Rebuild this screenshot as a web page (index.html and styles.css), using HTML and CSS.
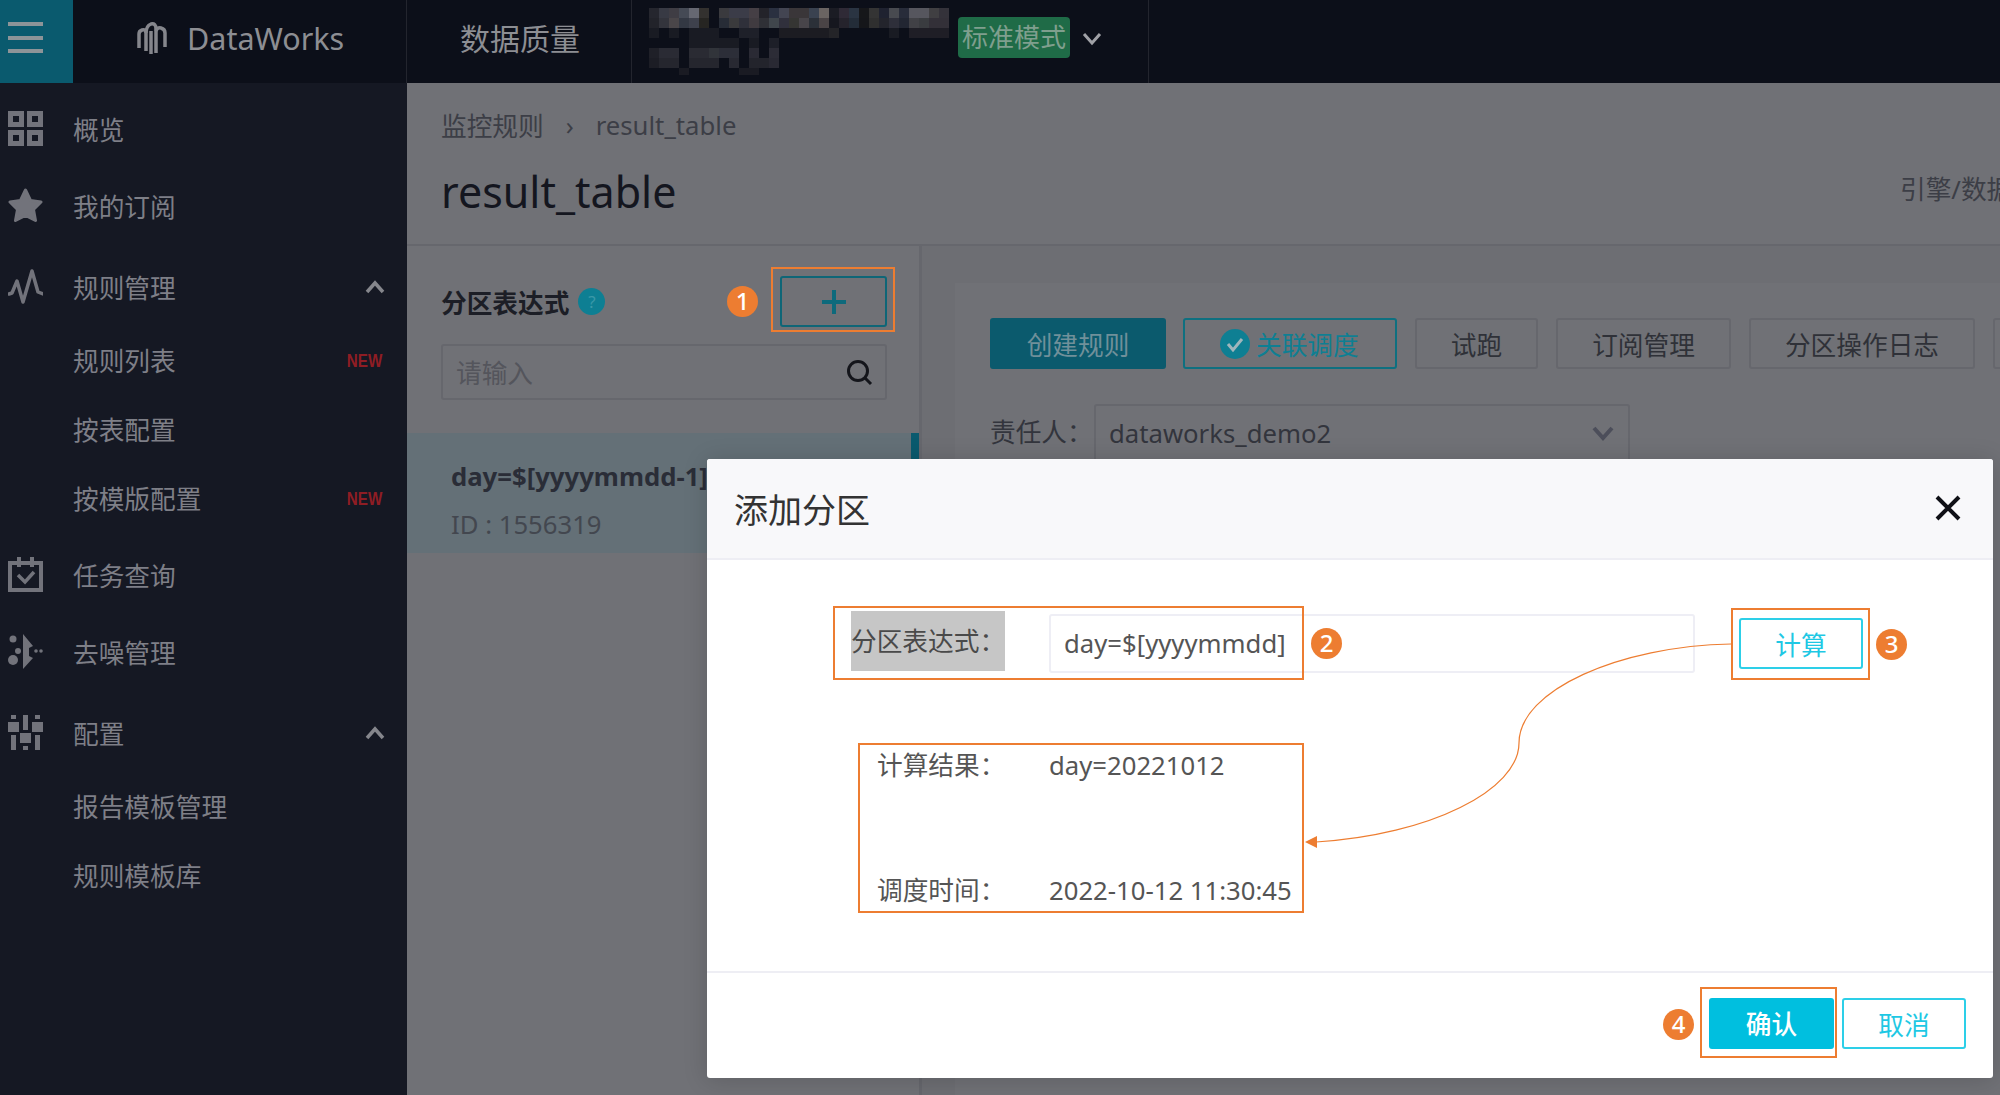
FILE: index.html
```html
<!DOCTYPE html>
<html lang="zh-CN">
<head>
  <meta charset="UTF-8" />
  <title>DataWorks 数据质量</title>
  <link rel="stylesheet" href="styles.css">
</head>
<body>
  <header class="topbar">
    <div class="menu-tile"><span></span><span></span><span></span></div>
    <div class="brand">
      <svg class="brand-logo" viewBox="0 0 34 36" fill="none" stroke="#85868c" stroke-width="3.500">
        <path d="M4 28V14q0-3 3-4q4-1 4 3V31"/>
        <path d="M11 13q0-7 5-9q5-1 5 5V33"/>
        <path d="M21 11q1-4 5-3q4 1 4 5V27"/>
        <path d="M16 11V34"/>
      </svg>
      <span>DataWorks</span>
    </div>
    <div class="product">数据质量</div>
    <div class="workspace">
      <svg class="mosaic" width="310" height="70" viewBox="0 0 310 70">
        <g>
          <rect x="0" y="0" width="10" height="10" fill="#25262e"/><rect x="10" y="0" width="10" height="10" fill="#383a44"/><rect x="20" y="0" width="10" height="10" fill="#3f3d44"/><rect x="30" y="0" width="10" height="10" fill="#454a55"/><rect x="40" y="0" width="10" height="10" fill="#666872"/><rect x="50" y="0" width="10" height="10" fill="#33312f"/>
          <rect x="70" y="0" width="10" height="10" fill="#3a3a3e"/><rect x="80" y="0" width="20" height="10" fill="#3b3c48"/><rect x="100" y="0" width="10" height="10" fill="#453f45"/><rect x="110" y="0" width="10" height="10" fill="#23232a"/><rect x="120" y="0" width="10" height="10" fill="#2a3040"/><rect x="130" y="0" width="10" height="10" fill="#434552"/><rect x="140" y="0" width="20" height="10" fill="#3a3639"/><rect x="160" y="0" width="10" height="10" fill="#3a4250"/><rect x="170" y="0" width="10" height="10" fill="#6a6462"/><rect x="180" y="0" width="10" height="10" fill="#1b1c24"/><rect x="190" y="0" width="10" height="10" fill="#2f2a36"/><rect x="200" y="0" width="10" height="10" fill="#2a3442"/><rect x="210" y="0" width="10" height="10" fill="#16171a"/><rect x="220" y="0" width="10" height="10" fill="#343434"/><rect x="230" y="0" width="10" height="10" fill="#1f2230"/><rect x="240" y="0" width="10" height="10" fill="#484a50"/><rect x="250" y="0" width="10" height="10" fill="#282c3a"/><rect x="260" y="0" width="20" height="10" fill="#56565e"/><rect x="280" y="0" width="10" height="10" fill="#403f42"/><rect x="290" y="0" width="10" height="10" fill="#34323a"/>
        </g>
        <g>
          <rect x="0" y="10" width="10" height="10" fill="#22232a"/><rect x="10" y="10" width="10" height="10" fill="#33343c"/><rect x="20" y="10" width="10" height="10" fill="#4a4649"/><rect x="30" y="10" width="10" height="10" fill="#333843"/><rect x="40" y="10" width="10" height="10" fill="#3e414c"/><rect x="50" y="10" width="10" height="10" fill="#262522"/>
          <rect x="70" y="10" width="10" height="10" fill="#272c36"/><rect x="80" y="10" width="10" height="10" fill="#3a3a3c"/><rect x="90" y="10" width="10" height="10" fill="#2f303a"/><rect x="100" y="10" width="10" height="10" fill="#403b40"/><rect x="110" y="10" width="10" height="10" fill="#2f3036"/><rect x="120" y="10" width="10" height="10" fill="#40464c"/><rect x="130" y="10" width="10" height="10" fill="#30303c"/><rect x="140" y="10" width="10" height="10" fill="#353533"/><rect x="150" y="10" width="10" height="10" fill="#48454a"/><rect x="160" y="10" width="10" height="10" fill="#2b3038"/><rect x="170" y="10" width="10" height="10" fill="#4a4446"/><rect x="180" y="10" width="10" height="10" fill="#16171f"/><rect x="190" y="10" width="10" height="10" fill="#25232c"/><rect x="200" y="10" width="10" height="10" fill="#232c38"/><rect x="210" y="10" width="10" height="10" fill="#15161a"/><rect x="220" y="10" width="10" height="10" fill="#2f2f2f"/><rect x="230" y="10" width="10" height="10" fill="#23242c"/><rect x="240" y="10" width="10" height="10" fill="#2e2f3a"/><rect x="250" y="10" width="10" height="10" fill="#222632"/><rect x="260" y="10" width="10" height="10" fill="#414146"/><rect x="270" y="10" width="10" height="10" fill="#3a3c40"/><rect x="280" y="10" width="20" height="10" fill="#333038"/>
        </g>
        <g fill="#191b23">
          <rect x="0" y="20" width="10" height="10"/><rect x="20" y="20" width="10" height="10"/><rect x="40" y="20" width="30" height="10"/><rect x="90" y="20" width="20" height="10" fill="#1e2029"/><rect x="130" y="20" width="60" height="10" fill="#1c1c22"/><rect x="180" y="20" width="10" height="10" fill="#242428"/><rect x="240" y="20" width="10" height="10"/><rect x="260" y="20" width="40" height="10" fill="#1f1e26"/>
          <rect x="40" y="30" width="50" height="10"/><rect x="100" y="30" width="10" height="10"/><rect x="120" y="30" width="10" height="10" fill="#1d1f28"/>
        </g>
        <g>
          <rect x="0" y="40" width="10" height="10" fill="#1f2028"/><rect x="10" y="40" width="20" height="10" fill="#2a2b34"/><rect x="40" y="40" width="20" height="10" fill="#2a2b33"/><rect x="60" y="40" width="10" height="10" fill="#31343a"/><rect x="70" y="40" width="20" height="10" fill="#2c2e38"/><rect x="100" y="40" width="10" height="10" fill="#2a2a34"/><rect x="120" y="40" width="10" height="10" fill="#2c2c36"/>
          <rect x="0" y="50" width="10" height="10" fill="#1c1d25"/><rect x="10" y="50" width="20" height="10" fill="#25262e"/><rect x="40" y="50" width="30" height="10" fill="#25262e"/><rect x="80" y="50" width="10" height="10" fill="#282932"/><rect x="100" y="50" width="20" height="10" fill="#23242c"/><rect x="120" y="50" width="10" height="10" fill="#292933"/>
          <rect x="30" y="60" width="10" height="7" fill="#1a1b23"/><rect x="90" y="60" width="20" height="7" fill="#1a1b23"/>
        </g>
      </svg>
      <span class="mode-tag">标准模式</span>
      <svg class="chev-small" width="20" height="14" viewBox="0 0 20 14" fill="none" stroke="#a0a1a6" stroke-width="3"><path d="M2 2l8 9 8-9"/></svg>
    </div>
  </header>

  <div class="layout">
    <nav class="sidebar">
      <div class="nav-item">
        <svg class="nav-icon" viewBox="0 0 35 35" fill="none" stroke="#72737b" stroke-width="5"><rect x="2.500" y="2.500" width="11" height="11"/><rect x="21.500" y="2.500" width="11" height="11"/><rect x="2.500" y="21.500" width="11" height="11"/><rect x="21.500" y="21.500" width="11" height="11"/></svg>
        <span>概览</span>
      </div>
      <div class="nav-item">
        <svg class="nav-icon" viewBox="0 0 35 35" fill="#72737b" stroke="#72737b" stroke-width="3" stroke-linejoin="round"><path d="M17.5 2l5 10.500 10.500 1.500-7.500 7.500 2 11-10-5-10 5 2-11L2 14l10.500-1.500z"/></svg>
        <span>我的订阅</span>
      </div>
      <div class="nav-item nav-group">
        <svg class="nav-icon" viewBox="0 0 35 35" fill="none" stroke="#72737b" stroke-width="3.500" stroke-linejoin="round" stroke-linecap="round"><path d="M1 25l3-1 5-12 6 21 9-31 6 21 5 2"/></svg>
        <span>规则管理</span>
        <svg class="nav-chev" width="20" height="14" viewBox="0 0 20 14" fill="none" stroke="#85868c" stroke-width="3.500"><path d="M2 12l8-9 8 9"/></svg>
      </div>
      <div class="nav-sub"><span>规则列表</span><em class="new-tag">NEW</em></div>
      <div class="nav-sub"><span>按表配置</span></div>
      <div class="nav-sub"><span>按模版配置</span><em class="new-tag">NEW</em></div>
      <div class="nav-item nav-group">
        <svg class="nav-icon" viewBox="0 0 35 35" fill="none" stroke="#72737b" stroke-width="4"><rect x="2" y="6" width="31" height="27"/><path d="M11 0v10M24 0v10"/><path d="M10 18l7 7 9-10" stroke-width="3.500"/></svg>
        <span>任务查询</span>
      </div>
      <div class="nav-item">
        <svg class="nav-icon" viewBox="0 0 35 35" fill="#72737b"><circle cx="5" cy="5" r="3.500"/><circle cx="10" cy="17" r="3"/><circle cx="5" cy="26" r="5"/><path d="M15 0l10 12-4 2v8l4 2-10 11z"/><circle cx="28" cy="17" r="1.800"/><circle cx="33" cy="17" r="1.800"/></svg>
        <span>去噪管理</span>
      </div>
      <div class="nav-item nav-group">
        <svg class="nav-icon" viewBox="0 0 35 35" fill="#72737b"><rect x="3" y="0" width="5" height="4"/><rect x="0" y="7" width="11" height="10"/><rect x="3" y="20" width="5" height="15"/><rect x="15" y="0" width="5" height="15"/><rect x="12" y="18" width="11" height="10"/><rect x="15" y="31" width="5" height="4"/><rect x="27" y="0" width="5" height="4"/><rect x="24" y="7" width="11" height="10"/><rect x="27" y="20" width="5" height="15"/></svg>
        <span>配置</span>
        <svg class="nav-chev" width="20" height="14" viewBox="0 0 20 14" fill="none" stroke="#85868c" stroke-width="3.500"><path d="M2 12l8-9 8 9"/></svg>
      </div>
      <div class="nav-sub"><span>报告模板管理</span></div>
      <div class="nav-sub"><span>规则模板库</span></div>
    </nav>

    <main class="main">
      <section class="page-head">
        <div class="crumbs"><span>监控规则</span><i>›</i><span>result_table</span></div>
        <div class="title-row">
          <h1>result_table</h1>
          <span class="engine">引擎/数据源</span>
        </div>
      </section>

      <section class="content">
        <aside class="partition-panel">
          <div class="panel-head">
            <strong>分区表达式</strong>
            <span class="help">?</span>
            <span class="marker marker-one">1</span>
            <button class="plus-btn">
              <svg width="28" height="28" viewBox="0 0 28 28" fill="none" stroke="#0e6a7c" stroke-width="4"><path d="M14 2v24M2 14h24"/></svg>
              <span class="note-box note-plus"></span>
            </button>
          </div>
          <div class="search">
            <span>请输入</span>
            <svg width="28" height="28" viewBox="0 0 28 28" fill="none" stroke="#14151b" stroke-width="3"><circle cx="13" cy="13" r="9.500"/><path d="M20 20l6 6"/></svg>
          </div>
          <div class="partition-item">
            <b>day=$[yyyymmdd-1]</b>
            <span>ID : 1556319</span>
          </div>
        </aside>

        <div class="rules-area">
          <div class="rules-card">
            <div class="toolbar">
              <button class="tool-btn tool-primary">创建规则</button>
              <button class="tool-btn tool-linked">
                <svg width="30" height="30" viewBox="0 0 30 30"><circle cx="15" cy="15" r="15" fill="#0e7f93"/><path d="M8 15l5 6 9-11" fill="none" stroke="#9fb6bc" stroke-width="3"/></svg>
                关联调度
              </button>
              <button class="tool-btn tool-run">试跑</button>
              <button class="tool-btn tool-sub">订阅管理</button>
              <button class="tool-btn tool-log">分区操作日志</button>
              <button class="tool-btn tool-more"></button>
            </div>
            <div class="filter-row">
              <label>责任人：</label>
              <div class="owner-select">
                <span>dataworks_demo2</span>
                <svg width="24" height="16" viewBox="0 0 24 16" fill="none" stroke="#4c4e5a" stroke-width="4"><path d="M3 3l9 10 9-10"/></svg>
              </div>
            </div>
          </div>
        </div>
      </section>
    </main>
  </div>

  <div class="modal">
    <div class="modal-head">
      <h2>添加分区</h2>
      <svg width="26" height="26" viewBox="0 0 26 26" fill="none" stroke="#0f1016" stroke-width="4"><path d="M2 2l22 22M24 2L2 24"/></svg>
    </div>
    <div class="modal-body">
      <div class="expr-row">
        <label class="expr-label">分区表达式：</label>
        <div class="expr-input">day=$[yyyymmdd]</div>
        <button class="ghost-btn calc-btn">计算</button>
      </div>
      <div class="result-grid">
        <span>计算结果：</span><span>day=20221012</span>
        <span>调度时间：</span><span>2022-10-12 11:30:45</span>
      </div>
      <span class="note-box note-expr"></span>
      <span class="note-box note-result"></span>
      <span class="note-box note-calc"></span>
      <span class="marker marker-two">2</span>
      <span class="marker marker-three">3</span>
    </div>
    <div class="modal-foot">
      <span class="marker marker-four">4</span>
      <button class="solid-btn">确认</button>
      <button class="ghost-btn">取消</button>
      <span class="note-box note-confirm"></span>
    </div>
    <svg class="flow-arrow" width="1286" height="619" viewBox="0 0 1286 619" fill="none">
      <path d="M1024 185C913 187 812 231 812 284C812 331 723 376 609 383" stroke="#ed7d31" stroke-width="1.200"/>
      <path d="M598 383l12-6v12z" fill="#ed7d31"/>
    </svg>
  </div>
</body>
</html>
```

FILE: styles.css
```css
* {
  box-sizing: border-box;
}

body {
  margin: 0;
  width: 2000px;
  height: 1095px;
  overflow: hidden;
  position: relative;
  font-family: "Noto Sans", "Noto Sans CJK SC", sans-serif;
  font-size: 25.7px;
  background: #707176;
}

button {
  font-family: inherit;
  font-size: inherit;
  padding: 0;
  background: none;
}

/* top bar */
.topbar {
  height: 83px;
  display: flex;
  background: #0c0f19;
  color: #8d8e93;
}

.menu-tile {
  width: 73px;
  background: #0a5a6e;
  display: flex;
  flex-direction: column;
  justify-content: center;
  gap: 9.500px;
  padding: 0 0 8px 8px;
}

.menu-tile span {
  display: block;
  width: 35px;
  height: 4px;
  background: #8d9498;
}

.brand {
  width: 334px;
  display: flex;
  align-items: center;
  padding: 0 0 8px 62px;
  gap: 18px;
  font-size: 30.500px;
  border-right: 1px solid #23252e;
}

.brand-logo {
  width: 34px;
  height: 36px;
}

.product {
  width: 225px;
  display: flex;
  align-items: center;
  padding: 0 0 10px 53px;
  font-size: 30px;
  border-right: 1px solid #23252e;
}

.workspace {
  width: 517px;
  display: flex;
  align-items: flex-start;
  padding-left: 17px;
  padding-top: 8px;
  border-right: 1px solid #23252e;
}

.mosaic {
  flex-shrink: 0;
  margin-right: -1px;
}

.mode-tag {
  margin-top: 9px;
  width: 112px;
  height: 41px;
  flex-shrink: 0;
  background: #1f6b47;
  color: #7f9f8e;
  border-radius: 4px;
  text-align: center;
  line-height: 40px;
  font-size: 26px;
  white-space: nowrap;
}

.chev-small {
  margin: 24px 0 0 12px;
  flex-shrink: 0;
}

.layout {
  height: 1012px;
  display: flex;
}

/* sidebar */
.sidebar {
  width: 407px;
  flex-shrink: 0;
  padding-top: 7px;
  background: #151823;
  color: #7e7f87;
}

.nav-item {
  height: 77px;
  display: flex;
  align-items: center;
  padding-left: 8px;
  position: relative;
}

.nav-group {
  margin-top: 4px;
}

.nav-icon {
  width: 35px;
  height: 35px;
  margin-right: 30px;
}

.nav-chev {
  position: absolute;
  left: 365px;
  top: 32px;
}

.nav-sub {
  height: 69px;
  display: flex;
  align-items: center;
  padding-left: 73px;
  padding-right: 25px;
  justify-content: space-between;
}

.new-tag {
  margin-top: 3px;
  font-family: "Liberation Sans", sans-serif;
  font-style: normal;
  font-weight: 700;
  font-size: 19px;
  color: #8f1d24;
  transform: scaleX(0.8);
  transform-origin: right center;
}

/* main page behind the dialog */
.main {
  flex: 1;
  min-width: 0;
  display: flex;
  flex-direction: column;
  overflow: hidden;
  color: #3c3e46;
}

.page-head {
  height: 163px;
  padding: 25px 0 0 34px;
  border-bottom: 2px solid #66676d;
}

.crumbs {
  display: flex;
  align-items: center;
  height: 34px;
}

.crumbs i {
  font-style: normal;
  margin: 0 22px;
}

.title-row {
  display: flex;
  align-items: center;
  margin-top: 19px;
  height: 60px;
}

.title-row h1 {
  margin: 0;
  font-size: 43px;
  font-weight: 400;
  color: #14161f;
}

.engine {
  width: 100px;
  margin-left: auto;
  white-space: nowrap;
  position: relative;
  top: -3px;
}

.content {
  flex: 1;
  display: flex;
  min-height: 0;
}

.partition-panel {
  width: 515px;
  flex-shrink: 0;
  border-right: 3px solid #66676d;
}

.panel-head {
  display: flex;
  align-items: center;
  margin: 30px 32px 0 34px;
  height: 51px;
  color: #1c1e26;
  position: relative;
}

.panel-head strong {
  font-weight: 700;
}

.help {
  width: 27px;
  height: 27px;
  margin-left: 9px;
  border-radius: 50%;
  background: #0e7f93;
  color: #3a98a8;
  font-size: 17px;
  line-height: 27px;
  text-align: center;
}

.plus-btn {
  width: 107px;
  height: 51px;
  margin-left: auto;
  border: 2px solid #0e6677;
  border-radius: 3px;
  display: flex;
  align-items: center;
  justify-content: center;
  position: relative;
}

.search {
  margin: 17px 32px 0 34px;
  height: 56px;
  border: 2px solid #66676d;
  border-radius: 3px;
  display: flex;
  align-items: center;
  justify-content: space-between;
  padding: 0 12px 0 13px;
  color: #54555c;
}

.partition-item {
  margin-top: 33px;
  height: 120px;
  padding: 27px 0 0 44px;
  background: #647077;
  position: relative;
  display: flex;
  flex-direction: column;
  gap: 13px;
  white-space: nowrap;
  overflow: hidden;
}

.partition-item b {
  line-height: 34px;
  color: #2a2d37;
}

.partition-item span {
  line-height: 36px;
  color: #43474f;
}

.partition-item::after {
  content: "";
  position: absolute;
  top: 0;
  right: 0;
  width: 8px;
  height: 100%;
  background: #0a5a6e;
}

.rules-area {
  flex: 1;
  min-width: 0;
  padding: 37px 0 0 33px;
  background: #6d6e73;
}

.rules-card {
  height: 100%;
  padding: 35px 0 0 35px;
  background: #707176;
}

.toolbar {
  display: flex;
  gap: 18px;
}

.tool-btn {
  flex-shrink: 0;
  height: 51px;
  border: 2px solid #66676d;
  border-radius: 3px;
  color: #2f3138;
  white-space: nowrap;
}

.tool-primary {
  width: 176px;
  margin-right: -1px;
  background: #0b5a6d;
  border-color: #0b5a6d;
  color: #70909a;
}

.tool-linked {
  width: 214px;
  border-color: #0e7080;
  color: #0e7f93;
  display: flex;
  align-items: center;
  padding-left: 35px;
  gap: 6px;
}

.tool-run {
  width: 123px;
}

.tool-sub {
  width: 175px;
}

.tool-log {
  width: 226px;
}

.tool-more {
  width: 60px;
}

.filter-row {
  display: flex;
  align-items: center;
  margin-top: 35px;
}

.filter-row label {
  width: 104px;
  margin-top: -4px;
  color: #33353d;
}

.owner-select {
  width: 536px;
  height: 58px;
  display: flex;
  align-items: center;
  justify-content: space-between;
  padding: 0 13px 0 13px;
  border: 2px solid #66676d;
  border-radius: 3px;
  color: #33353d;
}

/* dialog */
.modal {
  position: absolute;
  left: 707px;
  top: 459px;
  width: 1286px;
  height: 619px;
  display: flex;
  flex-direction: column;
  background: #fff;
  border-radius: 3px;
  box-shadow: 0 2px 24px rgba(0, 0, 0, 0.16);
  color: #555;
}

.modal-head {
  height: 101px;
  display: flex;
  align-items: center;
  justify-content: space-between;
  padding: 0 32px 0 27px;
  background: #f8f8fa;
  border-bottom: 2px solid #eeeef4;
  border-radius: 3px 3px 0 0;
}

.modal-head svg {
  margin-bottom: 2px;
}

.modal-head h2 {
  margin: 0;
  font-size: 34px;
  font-weight: 400;
  color: #333;
}

.modal-body {
  flex: 1;
  position: relative;
  padding: 54px 0 0 144px;
}

.expr-row {
  display: flex;
  align-items: center;
  height: 59px;
}

.expr-label {
  width: 154px;
  height: 60px;
  margin-bottom: 5px;
  flex-shrink: 0;
  background: #c6c6c6;
  line-height: 62px;
  color: #4a4a4a;
  white-space: nowrap;
}

.expr-input {
  width: 646px;
  height: 59px;
  margin-left: 44px;
  flex-shrink: 0;
  padding-left: 13px;
  border: 2px solid #eeeef5;
  border-radius: 3px;
  line-height: 55px;
}

.ghost-btn {
  width: 124px;
  height: 51px;
  border: 2px solid #2dcfe8;
  border-radius: 3px;
  background: #fff;
  color: #1ec8e4;
}

.calc-btn {
  margin-left: 44px;
  flex-shrink: 0;
}

.result-grid {
  display: grid;
  grid-template-columns: 172px auto;
  row-gap: 91px;
  margin: 76px 0 0 26px;
  line-height: 34px;
}

.modal-foot {
  height: 107px;
  display: flex;
  justify-content: flex-end;
  gap: 8px;
  padding: 25px 27px 0 0;
  border-top: 2px solid #eeeef4;
  position: relative;
}

.solid-btn {
  width: 125px;
  height: 51px;
  padding-bottom: 2px;
  border: 0;
  border-radius: 3px;
  background: #00bfdf;
  color: #fff;
  font-weight: 500;
}

/* orange call-outs drawn over the screenshot */
.note-box {
  position: absolute;
  border: 2.500px solid #ed7d31;
  pointer-events: none;
}

.note-plus {
  left: -11px;
  top: -11px;
  width: 124px;
  height: 65px;
}

.note-expr {
  left: 126px;
  top: 46px;
  width: 471px;
  height: 74px;
}

.note-result {
  left: 151px;
  top: 183px;
  width: 446px;
  height: 170px;
}

.note-calc {
  left: 1024px;
  top: 48px;
  width: 139px;
  height: 72px;
}

.note-confirm {
  left: 993px;
  top: 14px;
  width: 137px;
  height: 71px;
}

.marker {
  position: absolute;
  width: 31px;
  height: 31px;
  border-radius: 50%;
  background: #ed7d31;
  color: #fff;
  font-size: 24px;
  font-weight: 500;
  line-height: 30px;
  text-align: center;
}

.marker-one {
  left: 286px;
  top: 10px;
}

.marker-two {
  left: 604px;
  top: 68px;
}

.marker-three {
  left: 1169px;
  top: 69px;
}

.marker-four {
  left: 956px;
  top: 36px;
}

.flow-arrow {
  position: absolute;
  left: 0;
  top: 0;
  pointer-events: none;
}
```
